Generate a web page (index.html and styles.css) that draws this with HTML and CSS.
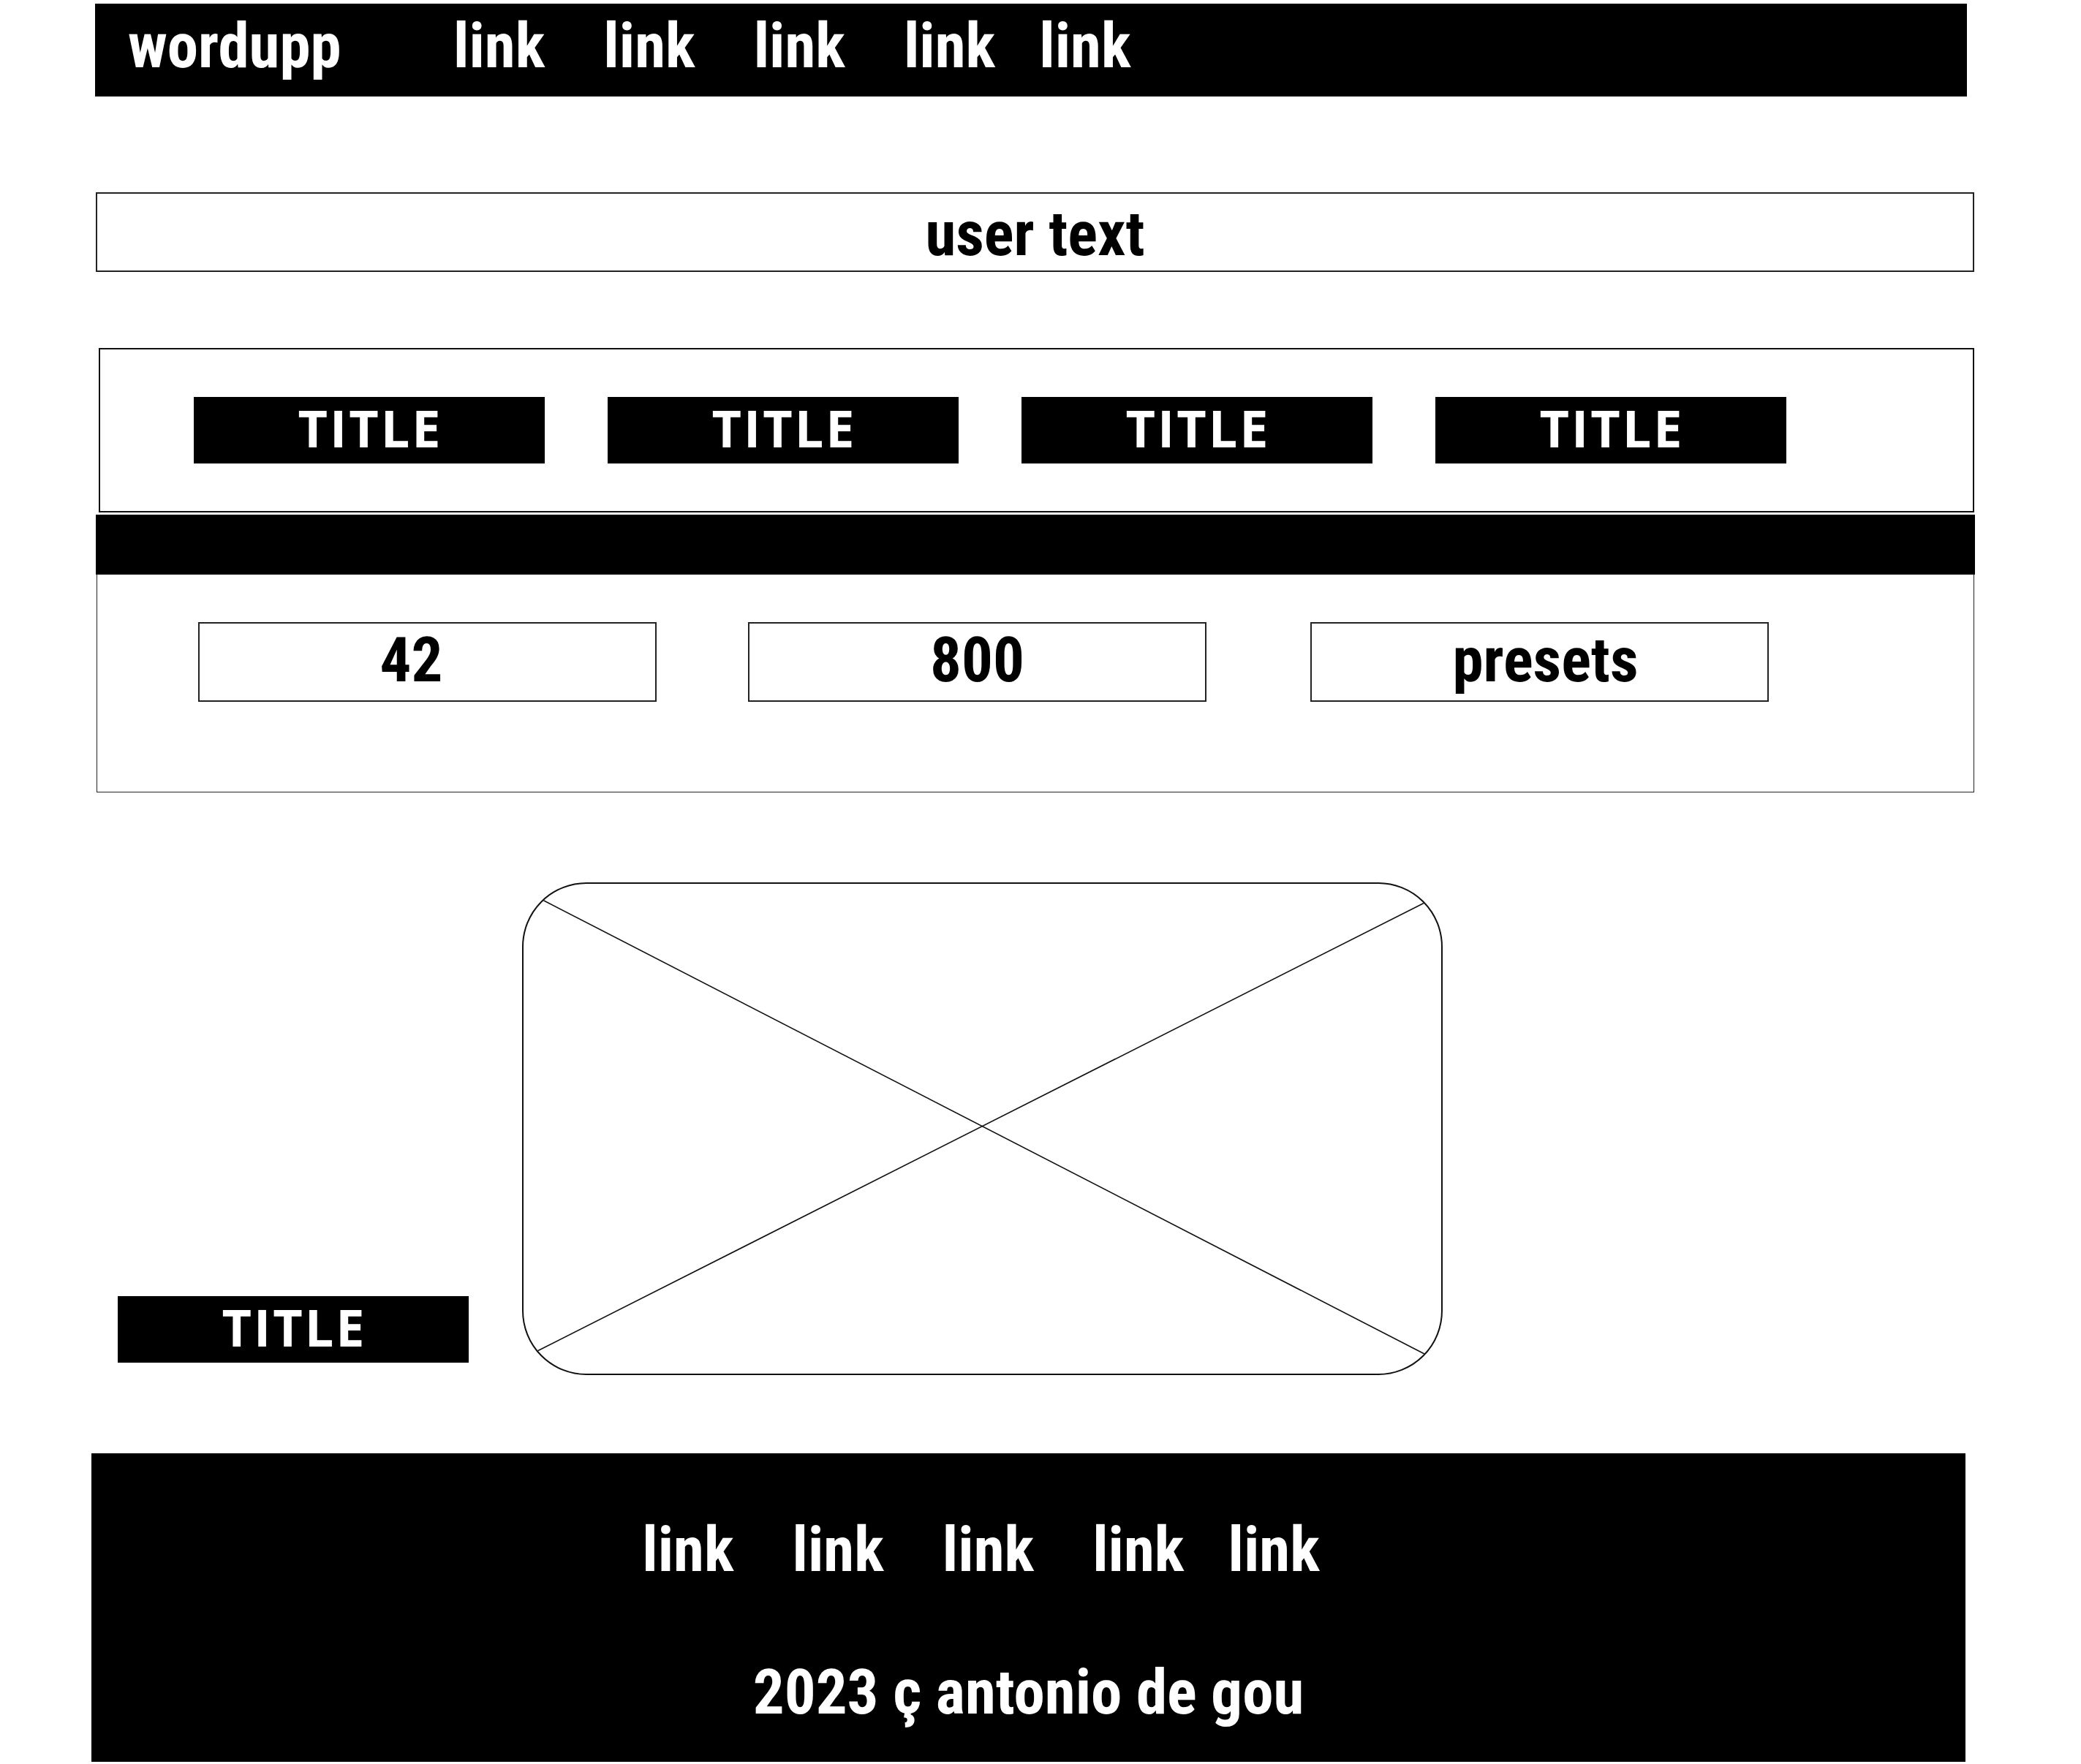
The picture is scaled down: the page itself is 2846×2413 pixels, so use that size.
FILE: index.html
```html
<!DOCTYPE html>
<html lang="en">
<head>
  <meta charset="UTF-8">
  <meta name="viewport" content="width=device-width, initial-scale=1.0">
  <title>wordupp</title>
  <link rel="stylesheet" href="styles.css">
</head>
<body>
  <!-- top bar -->
  <nav class="topbar">
    <span class="brand">wordupp</span>
    <div class="links">
      <a href="#" class="link">link</a>
      <a href="#" class="link">link</a>
      <a href="#" class="link">link</a>
      <a href="#" class="link">link</a>
      <a href="#" class="link">link</a>
    </div>
  </nav>

  <div class="user-box">user text</div>

  <!-- tabs -->
  <div class="tabs">
    <div class="title-btn">TITLE</div>
    <div class="title-btn">TITLE</div>
    <div class="title-btn">TITLE</div>
    <div class="title-btn">TITLE</div>
  </div>

  <div class="strip"></div>

  <div class="settings">
    <div class="field field-num">42</div>
    <div class="field">800</div>
    <div class="field field-presets">presets</div>
  </div>

  <!-- media -->
  <div class="media">
    <div class="title-btn">TITLE</div>
    <div class="placeholder">
      <svg width="1255" height="670" viewBox="0 0 1255 670">
        <line x1="26" y1="22" x2="1232" y2="643" stroke="#111" stroke-width="1.6"/>
        <line x1="19" y1="639" x2="1232" y2="26" stroke="#111" stroke-width="1.6"/>
      </svg>
    </div>
  </div>

  <footer class="footer">
    <div class="links footer-links">
      <a href="#" class="link">link</a>
      <a href="#" class="link">link</a>
      <a href="#" class="link">link</a>
      <a href="#" class="link">link</a>
      <a href="#" class="link">link</a>
    </div>
    <p class="copy">2023 ç antonio de gou</p>
  </footer>
</body>
</html>
```

FILE: styles.css
```css
body {
  margin: 0;
  background: #fff;
  color: #000;
  font-family: Roboto, "DejaVu Sans Condensed", sans-serif;
  font-stretch: 75%;
  font-weight: bold;
  font-size: 85px;
  line-height: 100px;
}
.topbar {
  box-sizing: border-box;
  display: flex;
  align-items: flex-start;
  width: 2560px;
  height: 127px;
  margin: 5px 0 0 130px;
  padding: 8px 0 0 45px;
  background: #000;
  color: #fff;
}
.brand {
  width: 445px;
}
.links {
  display: flex;
  gap: 80px;
}
.links .link:last-child {
  margin-left: -20px;
}
.link {
  color: #fff;
  text-decoration: none;
}
.user-box {
  box-sizing: border-box;
  width: 2569px;
  height: 109px;
  margin: 131px 0 0 131px;
  padding-top: 5px;
  border: 2px solid #222;
  text-align: center;
}
.tabs {
  box-sizing: border-box;
  display: flex;
  align-items: center;
  gap: 86px;
  width: 2565px;
  height: 225px;
  margin: 104px 0 0 135px;
  padding-left: 128px;
  border: 2px solid #111;
}
.title-btn {
  box-sizing: border-box;
  width: 480px;
  height: 91px;
  padding-left: 3px;
  background: #000;
  color: #fff;
  font-family: "Open Sans", "Noto Sans", sans-serif;
  font-stretch: normal;
  font-size: 70px;
  font-weight: 700;
  letter-spacing: 3px;
  line-height: 85px;
  text-align: center;
}
.strip {
  width: 2570px;
  height: 82px;
  margin: 3px 0 0 131px;
  background: #000;
}
.settings {
  box-sizing: border-box;
  display: flex;
  gap: 125px;
  width: 2568px;
  height: 298px;
  margin-left: 132px;
  padding: 65px 0 0 138px;
  border: 1.5px solid #222;
  border-top: none;
}
.field {
  box-sizing: border-box;
  width: 627px;
  height: 109px;
  border: 2px solid #222;
  text-align: center;
}
.field-num {
  padding-right: 44px;
}
.field-presets {
  margin-left: 17px;
  padding-left: 16px;
}
.media {
  display: flex;
  align-items: flex-end;
  gap: 73px;
  margin: 123px 0 0 161px;
}
.media .title-btn {
  margin-bottom: 17px;
}
.placeholder {
  width: 1255px;
  height: 670px;
  border: 2px solid #111;
  border-radius: 88px;
  overflow: hidden;
}
.placeholder svg {
  display: block;
}
.footer {
  box-sizing: border-box;
  width: 2563px;
  min-height: 422px;
  margin: 107px 0 0 125px;
  padding-top: 82px;
  background: #000;
  color: #fff;
  text-align: center;
}
.footer-links {
  justify-content: center;
  padding-right: 130px;
}
.copy {
  margin: 95px 0 0;
}
```
